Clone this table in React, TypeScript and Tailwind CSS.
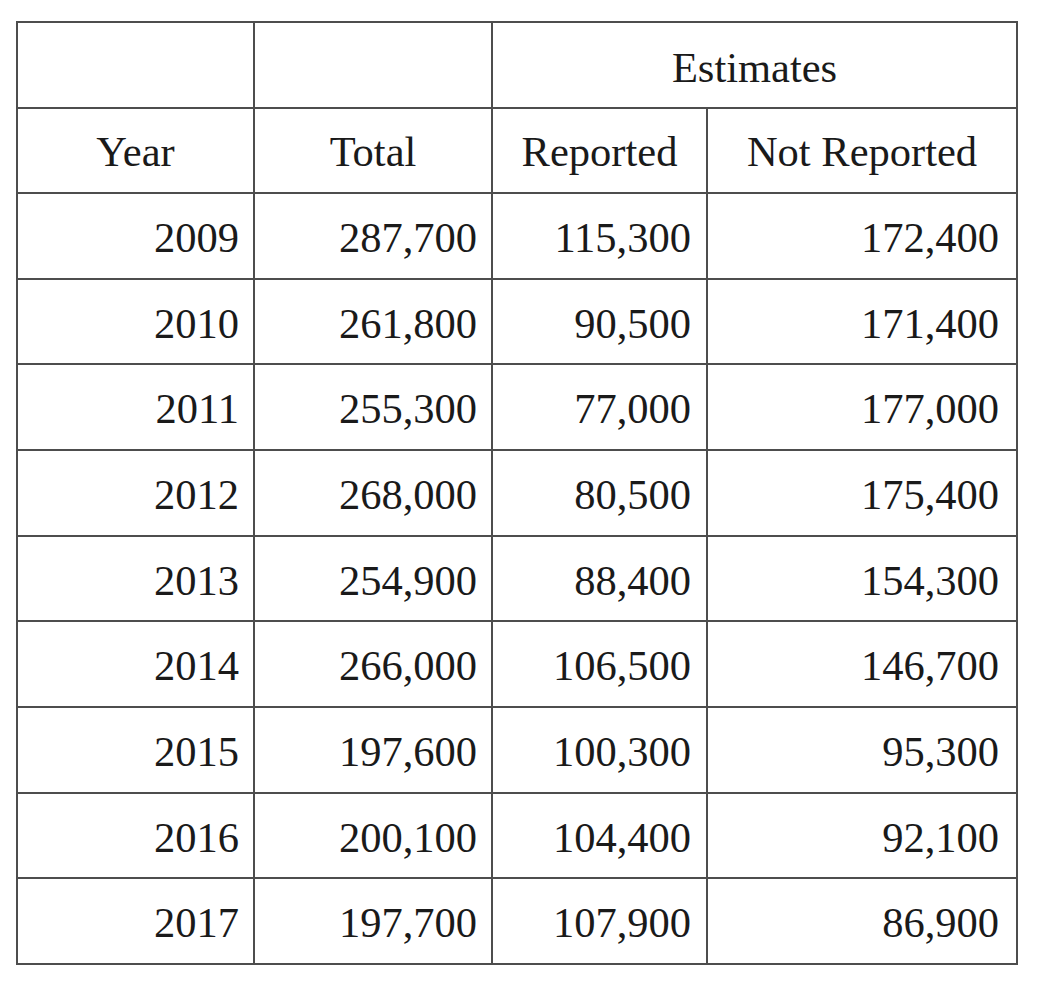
const rows = [
  ["2009", "287,700", "115,300", "172,400"],
  ["2010", "261,800", "90,500", "171,400"],
  ["2011", "255,300", "77,000", "177,000"],
  ["2012", "268,000", "80,500", "175,400"],
  ["2013", "254,900", "88,400", "154,300"],
  ["2014", "266,000", "106,500", "146,700"],
  ["2015", "197,600", "100,300", "95,300"],
  ["2016", "200,100", "104,400", "92,100"],
  ["2017", "197,700", "107,900", "86,900"],
];

const App = () => {
  return (
    <div className="w-[1039px] h-[981px] bg-white pt-[21px] pl-[16px] font-['Liberation_Serif','Times_New_Roman',serif] text-[42.5px] text-[#1a1a1a]">
      <table className="table-fixed border-collapse w-[1000px]">
        <colgroup>
          <col className="w-[237px]" />
          <col className="w-[238px]" />
          <col className="w-[215px]" />
          <col className="w-[310px]" />
        </colgroup>
        <thead>
          {/* HEADER */}
          <tr className="h-[86px]">
            <th className="border-2 border-[#4d4d4d] font-normal" />
            <th className="border-2 border-[#4d4d4d] font-normal" />
            <th colSpan={2} className="border-2 border-[#4d4d4d] font-normal text-center pt-[6px]">
              Estimates
            </th>
          </tr>
          <tr className="h-[85px]">
            <th className="border-2 border-[#4d4d4d] font-normal text-center pt-[2px]">Year</th>
            <th className="border-2 border-[#4d4d4d] font-normal text-center pt-[2px]">Total</th>
            <th className="border-2 border-[#4d4d4d] font-normal text-center pt-[2px]">Reported</th>
            <th className="border-2 border-[#4d4d4d] font-normal text-center pt-[2px]">Not Reported</th>
          </tr>
        </thead>
        <tbody>
          {rows.map((r) => (
            <tr key={r[0]} className="h-[85.67px]">
              <td className="border-2 border-[#4d4d4d] text-right pr-[14px] pt-[4px]">{r[0]}</td>
              <td className="border-2 border-[#4d4d4d] text-right pr-[14px] pt-[4px]">{r[1]}</td>
              <td className="border-2 border-[#4d4d4d] text-right pr-[15px] pt-[4px]">{r[2]}</td>
              <td className="border-2 border-[#4d4d4d] text-right pr-[17px] pt-[4px]">{r[3]}</td>
            </tr>
          ))}
        </tbody>
      </table>
    </div>
  );
};

export default App;
